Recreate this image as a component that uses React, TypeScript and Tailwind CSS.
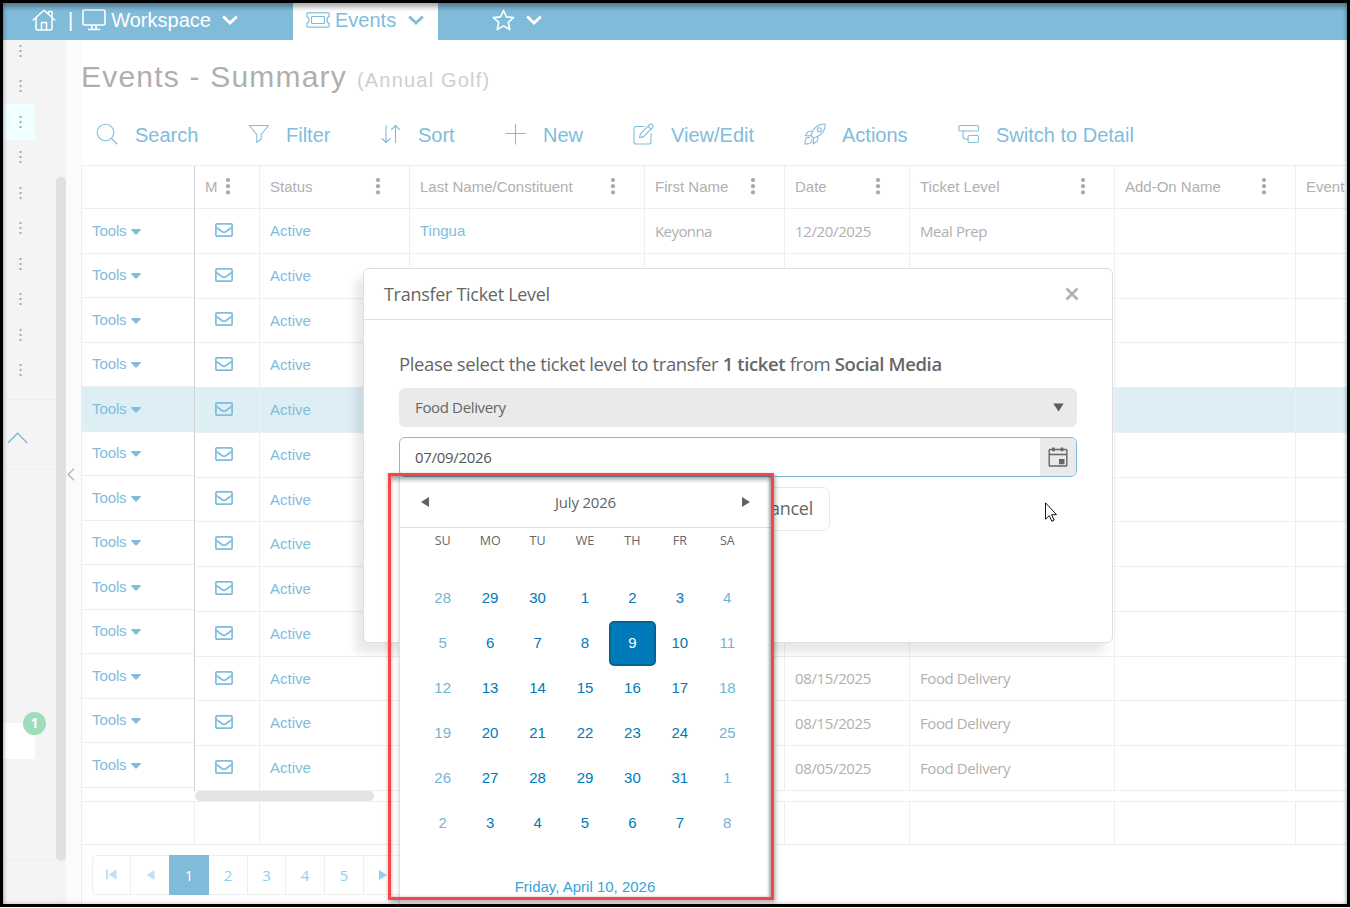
import clsx from "clsx";
import type { ReactNode } from "react";

type Row = {
  status: string;
  lastName?: string;
  firstName?: string;
  date?: string;
  ticketLevel?: string;
  selected?: boolean;
};

const rows: Row[] = [
  {
    status: "Active",
    lastName: "Tingua",
    firstName: "Keyonna",
    date: "12/20/2025",
    ticketLevel: "Meal Prep",
  },
  { status: "Active" },
  { status: "Active" },
  { status: "Active" },
  { status: "Active", selected: true },
  { status: "Active" },
  { status: "Active" },
  { status: "Active" },
  { status: "Active" },
  { status: "Active" },
  { status: "Active", date: "08/15/2025", ticketLevel: "Food Delivery" },
  { status: "Active", date: "08/15/2025", ticketLevel: "Food Delivery" },
  { status: "Active", date: "08/05/2025", ticketLevel: "Food Delivery" },
];

const columns = [
  "M",
  "Status",
  "Last Name/Constituent",
  "First Name",
  "Date",
  "Ticket Level",
  "Add-On Name",
  "Event",
];

const gridCols = "grid grid-cols-[65px_150px_235px_140px_125px_205px_181px_51px]";
const segoe = "font-['Open_Sans',sans-serif]";

const weekDays = ["SU", "MO", "TU", "WE", "TH", "FR", "SA"];
const days = [
  28, 29, 30, 1, 2, 3, 4, 5, 6, 7, 8, 9, 10, 11, 12, 13, 14, 15, 16, 17, 18, 19,
  20, 21, 22, 23, 24, 25, 26, 27, 28, 29, 30, 31, 1, 2, 3, 4, 5, 6, 7, 8,
];

function Chevron({ className }: { className?: string }) {
  return (
    <svg className={className} width="16" height="10" viewBox="0 0 16 10">
      <path
        d="M1.2 1.500 8 8l6.800-6.500"
        fill="none"
        stroke="currentColor"
        strokeWidth="2.800"
      />
    </svg>
  );
}

function HomeIcon() {
  return (
    <svg
      width="24"
      height="22"
      viewBox="0 0 24 22"
      fill="none"
      stroke="currentColor"
      strokeWidth="1.5"
      strokeLinecap="round"
      strokeLinejoin="round">
      <path d="M1.2 11 12 1.2 22.8 11M4 9v10.5q0 1.5 1.5 1.5h13q1.5 0 1.5-1.5V9M9.5 21v-7.5h5V21M16.5 4V2.5h3.5v5" />
    </svg>
  );
}

function MonitorIcon() {
  return (
    <svg
      width="24"
      height="22"
      viewBox="0 0 24 22"
      fill="none"
      stroke="currentColor"
      strokeWidth="1.6"
      strokeLinejoin="round">
      <rect x="1" y="1" width="22" height="15" rx="1.5" />
      <path d="M10 16v4M14 16v4M6 20.5h12" />
    </svg>
  );
}

function TicketIcon() {
  return (
    <svg
      width="24"
      height="16"
      viewBox="0 0 24 16"
      fill="none"
      stroke="currentColor"
      strokeWidth="1.2"
      strokeLinejoin="round">
      <path d="M2 .8h20q1.2 0 1.2 1.2v2.6q-2.2.6-2.2 3.4t2.2 3.4V14q0 1.2-1.2 1.2H2Q.8 15.200.8 14v-2.600Q3 10.800 3 8T.8 4.600V2Q.8.8 2 .8Z" />
      <rect x="5.500" y="4.500" width="13" height="7" rx=".8" />
    </svg>
  );
}

function StarIcon() {
  return (
    <svg width="23" height="22" viewBox="0 0 23 22">
      <path
        d="m11.500 1.300 2.900 6.600 7.200.7-5.400 4.800 1.600 7.200-6.300-3.700-6.300 3.700 1.600-7.200L1.400 8.600l7.200-.7Z"
        fill="none"
        stroke="currentColor"
        strokeWidth="1.6"
        strokeLinejoin="round"
      />
    </svg>
  );
}

function ToolIcon({ children }: { children: ReactNode }) {
  return (
    <svg
      width="22"
      height="22"
      viewBox="0 0 22 22"
      fill="none"
      stroke="currentColor"
      strokeWidth="1.1"
      strokeLinecap="round"
      strokeLinejoin="round">
      {children}
    </svg>
  );
}

function ToolbarItem({
  label,
  width,
  gap,
  children,
}: {
  label: string;
  width: string;
  gap: string;
  children: ReactNode;
}) {
  return (
    <button type="button" className={clsx("flex items-center", width, gap)}>
      <ToolIcon>{children}</ToolIcon>
      <span className="pt-[2px] whitespace-nowrap">{label}</span>
    </button>
  );
}

function Toolbar() {
  return (
    <div className="flex h-[30px] pl-[15px] text-[20px] text-[#80bddd]">
      <ToolbarItem label="Search" width="w-[152px]" gap="gap-[17px]">
        <circle cx="9.500" cy="9.500" r="8.300" />
        <path d="m15.500 15.500 5.500 5.500" />
      </ToolbarItem>
      <ToolbarItem label="Filter" width="w-[132px]" gap="gap-4">
        <path d="M1.500 2.500h19l-7.300 9v4.500l-4.400 3.300v-7.800Z" />
      </ToolbarItem>
      <ToolbarItem label="Sort" width="w-[125px]" gap="gap-4">
        <path d="M6 2.500v17M2 15.500l4 4 4-4M15.500 19.500v-17M11.500 6.500l4-4 4 4" />
      </ToolbarItem>
      <ToolbarItem label="New" width="w-[127px]" gap="gap-4">
        <path d="M10.500 1v20M1 10.500h19.500" />
      </ToolbarItem>
      <ToolbarItem label="View/Edit" width="w-[172px]" gap="gap-[17px]">
        <path d="M12 3.500H4q-2 0-2 2V19q0 2 2 2h13q2 0 2-2v-8.500M7.500 14.800l1-4.200 9-9q1.300-1.100 2.800.2 1.500 1.500.3 2.800l-9 9ZM15.900 3.200l3.200 3.200" />
      </ToolbarItem>
      <ToolbarItem label="Actions" width="w-[154px]" gap="gap-4">
        <path d="M7 12.500Q8.500 6.500 13 3.200 16.500.8 21.200 1q.2 4.700-2.400 8.200-3.300 4.300-9.300 5.800ZM8.300 8.200H5.500q-1.300 0-2 1.200L1.200 12.700l5.800-.2M13.800 13.700v2.800q0 1.300-1.200 2l-3.300 2.300.2-5.800M5.500 14.500q-2.800-.8-4 2.200-.5 1.500-.5 4.300 2.800 0 4.300-.5 3-1.200 2.200-4" />
        <circle cx="15.300" cy="6.700" r="2" />
      </ToolbarItem>
      <ToolbarItem label="Switch to Detail" width="w-[180px]" gap="gap-4">
        <path d="M2 2.500h17.500q1 0 1 1V7q0 1-1 1H2Q1 8 1 7V3.500q0-1 1-1ZM5 8v5.500Q5 16 7.500 16H10" />
        <rect x="10" y="12.500" width="10.500" height="7" rx="1.500" />
      </ToolbarItem>
    </div>
  );
}

function ColumnMenu() {
  return (
    <svg className="shrink-0" width="6" height="18" viewBox="0 0 6 18" fill="#a9a9a9">
      <circle cx="3" cy="2" r="2.100" />
      <circle cx="3" cy="8.200" r="2.100" />
      <circle cx="3" cy="14.400" r="2.100" />
    </svg>
  );
}

function Envelope() {
  return (
    <svg
      width="18"
      height="14"
      viewBox="0 0 18 14"
      fill="none"
      stroke="#80bddd"
      strokeWidth="1.700">
      <rect x=".9" y=".9" width="16.200" height="12.200" rx="1" />
      <path d="M1 4.300 7.200 8.800q1.800 1.200 3.600 0L17 4.300" />
    </svg>
  );
}

function TopNav() {
  return (
    <header className="flex h-[37px] shrink-0 bg-[#80bbd9] text-[20px] text-white">
      <div className="flex w-[290px] items-center pb-[3px] pl-[29px]">
        <HomeIcon />
        <span className="ml-3 text-[20px]">|</span>
        <span className="ml-[9px] flex">
          <MonitorIcon />
        </span>
        <span className="ml-[5px]">Workspace</span>
        <Chevron className="ml-[11px]" />
      </div>
      <div className="flex w-[145px] items-center bg-white pb-[3px] pl-[13px] text-[#80bddd]">
        <TicketIcon />
        <span className="ml-[5px]">Events</span>
        <Chevron className="ml-3" />
      </div>
      <div className="flex items-center pb-[3px] pl-[54px]">
        <StarIcon />
        <Chevron className="ml-[11px]" />
      </div>
    </header>
  );
}

function Sidebar() {
  return (
    <aside className="flex w-[63px] shrink-0 bg-[#f4f4f4]">
      <div className="w-[53px]">
        <div className="-mt-[7px]">
          {Array.from({ length: 10 }, (_, i) => (
            <div
              key={i}
              className={clsx(
                "flex h-[35.500px] w-8 items-center justify-center pl-[3px]",
                i === 2 && "bg-[#f0ffff]",
              )}>
              <svg width="3" height="14" fill="#a8a8a8">
                <rect x=".5" y="1" width="2" height="2" />
                <rect x=".5" y="6" width="2" height="2" />
                <rect x=".5" y="11" width="2" height="2" />
              </svg>
            </div>
          ))}
        </div>
        <div className="mt-[11px] h-[71px] border-y border-[#eeeeee] pt-[32px] pl-1">
          <svg width="21" height="12" viewBox="0 0 21 12">
            <path
              d="M.8 11 10.500 1.200 20.200 11"
              fill="none"
              stroke="#7db7d6"
              strokeWidth="1.400"
            />
          </svg>
        </div>
        <div className="relative mt-[253px] h-9 w-8 bg-white">
          <span className="absolute -top-[11px] left-[20px] flex size-[23px] items-center justify-center rounded-full bg-[#9fdcba] pb-[3px] font-['Open_Sans',sans-serif] text-[14px] font-bold text-white">
            1
          </span>
        </div>
        <div className="mt-[101px] border-t border-[#eeeeee]" />
      </div>
      <div className="w-[10px] bg-[#f3f3f3] pt-[137px]">
        <div className="h-[684px] rounded-full bg-[#e0e0e0]" />
      </div>
    </aside>
  );
}

function Grid() {
  return (
    <div className="mt-4 text-[15px] text-[#b0b0b0]">
      <div className="flex items-start border-t border-l border-[#eeeeee]">
        <div className="h-[625px] w-[113px] shrink-0 border-r border-[#d2d2d2]">
          <div className="h-[43px] border-b border-[#eeeeee]" />
          {rows.map((row, i) => (
            <div
              key={i}
              className={clsx(
                "flex h-[44.520px] items-center gap-1 border-b border-[#eeeeee] pl-[10px] text-[#80bddd]",
                row.selected && "bg-[#deeef5]",
              )}>
              <span className="pt-[0.400px] tracking-[-0.1px]">Tools</span>
              <svg className="mt-[2px]" width="10" height="6" fill="#80bddd">
                <path d="M.8 0h8.400q1 .4.4 1.200L5.800 5.200q-.8.600-1.600 0L.4 1.200Q-.2.4.8 0Z" />
              </svg>
            </div>
          ))}
        </div>
        <div className="min-w-0 flex-1 overflow-hidden">
          <div className={clsx(gridCols, "h-[43px] border-b border-[#eeeeee]")}>
            {columns.map((column) => (
              <div
                key={column}
                className="flex items-center justify-between overflow-hidden border-r border-[#eeeeee] pr-[28px] pl-[10px] whitespace-nowrap last:border-r-0 last:pr-0">
                {column}
                {column !== "Event" && <ColumnMenu />}
              </div>
            ))}
          </div>
          {rows.map((row, i) => (
            <div
              key={i}
              className={clsx(
                gridCols,
                "h-[44.770px] border-b border-[#eeeeee] *:flex *:items-center *:border-r *:border-[#eeeeee] *:pl-[10px] *:last:border-r-0",
                row.selected && "bg-[#deeef5]",
              )}>
              <div>
                <span className="ml-[10px] pb-[2px]">
                  <Envelope />
                </span>
              </div>
              <div className="pt-[0.700px] text-[#80bddd]">{row.status}</div>
              <div className="text-[#80bddd]">{row.lastName}</div>
              <div className={clsx(segoe, "tracking-[-0.58px]")}>{row.firstName}</div>
              <div className={clsx(segoe, "tracking-[-0.36px]")}>{row.date}</div>
              <div className={clsx(segoe, "tracking-[-0.4px]")}>{row.ticketLevel}</div>
              <div />
              <div />
            </div>
          ))}
          <div className="h-[10px]">
            <div className="h-[10px] w-[179px] rounded-full bg-[#e4e4e4]" />
          </div>
        </div>
      </div>
      <div className="flex h-11 border-y border-l border-[#eeeeee]">
        <div className="w-[113px] shrink-0 border-r border-[#eeeeee]" />
        <div className={clsx(gridCols, "*:border-r *:border-[#eeeeee]")}>
          {columns.map((column) => (
            <div key={column} />
          ))}
        </div>
      </div>
      <div className="flex h-[59px] border-l border-[#eeeeee] pt-[10px] pl-[10px]">
        <div
          className={clsx(
            segoe,
            "flex h-10 text-[#8fd0ee] *:flex *:items-center *:justify-center *:border-y *:border-r *:border-[#eeeeee]",
          )}>
          <div className="w-[39px] rounded-l-[4px] border-l">
            <svg width="11" height="11" fill="#bde2f2">
              <path d="M0 .5h2v10H0ZM10.500.5v10L2.500 5.500Z" />
            </svg>
          </div>
          <div className="w-[38px] border-r-0! pl-px">
            <svg width="9" height="10" fill="#bde2f2">
              <path d="M8.500 0v10L.5 5Z" />
            </svg>
          </div>
          <div className="w-10 border-0! bg-[#80bbd9] text-white">1</div>
          <div className="w-[39px]">2</div>
          <div className="w-[38px]">3</div>
          <div className="w-[39px]">4</div>
          <div className="w-[39px]">5</div>
          <div className="w-[39px]">
            <svg width="9" height="10" fill="#8fd0ee">
              <path d="M0 0v10l8-5Z" />
            </svg>
          </div>
        </div>
      </div>
    </div>
  );
}

function TransferDialog() {
  return (
    <div
      role="dialog"
      className={clsx(
        segoe,
        "absolute top-[268px] left-[363px] h-[375px] w-[750px] rounded-md border border-[#dcdfe4] bg-white text-[#666666] shadow-[-8px_10px_10px_rgba(0,0,0,0.09)]",
      )}>
      <div className="flex h-[51px] items-center justify-between border-b border-[#dcdfe4] pr-[33px] pl-5 text-[18px]">
        <span className="tracking-[-0.29px]">Transfer Ticket Level</span>
        <svg width="14" height="14" viewBox="0 0 14 14">
          <path d="m1.500 1.500 11 11m0-11-11 11" stroke="#b0b0b0" strokeWidth="2.500" />
        </svg>
      </div>
      <div className="px-[35px] pt-[31px]">
        <p className="text-[18.500px] leading-[26px] tracking-[-0.38px] whitespace-nowrap">
          Please select the ticket level to transfer{" "}
          <span className="font-semibold">1 ticket</span> from{" "}
          <span className="font-semibold">Social Media</span>
        </p>
        <div className="mt-[11px] flex h-[39px] items-center justify-between rounded-md bg-[#eaeaea] pr-[13px] pl-4 text-[15px] tracking-[-0.35px]">
          Food Delivery
          <svg width="11" height="9" fill="#5c5c5c">
            <path d="M.3.5h10.400L5.500 8.500Z" />
          </svg>
        </div>
        <div className="mt-[10px] flex h-10 items-center overflow-hidden rounded-md border border-[#7dbbdb] text-[15px]">
          <span className="flex-1 pl-[15px] tracking-[-0.32px] text-[#555555]">07/09/2026</span>
          <span className="flex h-full w-9 items-center justify-center bg-[#eaeaea]">
            <svg width="20" height="20" viewBox="0 0 20 20" fill="none" stroke="#666666">
              <path
                d="M2 2.500h16q.8 0 .8.8v14.900q0 .8-.8.8H2q-.8 0-.8-.8V3.300q0-.8.8-.8ZM1.200 7.500h17.600"
                strokeWidth="1.400"
              />
              <path d="M5.500.500v3.700M14 .500v3.700" strokeWidth="2.600" />
              <path d="M11 12h5.500v5.200H11Z" fill="#666666" stroke="none" />
            </svg>
          </span>
        </div>
        <button
          type="button"
          className="mt-[10px] ml-[340px] h-11 w-[91px] rounded-[7px] border border-[#e8e8e8] pb-[2px] pl-[3px] text-[18px] tracking-[-0.3px]">
          Cancel
        </button>
      </div>
    </div>
  );
}

function Calendar() {
  return (
    <div className="absolute top-[477px] left-[399px] h-[427px] w-[373px] border-l border-[#dcdfe4] bg-white text-[15px] shadow-[0_0_5px_rgba(0,0,0,0.15)]">
      <div
        className={clsx(
          segoe,
          "flex h-[51px] items-center justify-between border-b border-[#dcdfe4] pr-[22px] pl-[21px] text-[#5f6368]",
        )}>
        <svg width="8" height="10" fill="#5f6368">
          <path d="M8 0v10L0 5Z" />
        </svg>
        <span className="tracking-[-0.2px]">July 2026</span>
        <svg width="8" height="10" fill="#5f6368">
          <path d="M0 0v10l8-5Z" />
        </svg>
      </div>
      <div
        className={clsx(
          segoe,
          "grid h-[27px] w-[351px] grid-cols-7 items-center pl-[19px] text-center text-[12.500px] text-[#666666]",
        )}>
        {weekDays.map((day) => (
          <span key={day}>{day}</span>
        ))}
      </div>
      <div className="mt-[21px] grid w-[351px] auto-rows-[45px] grid-cols-7 pl-[19px]">
        {days.map((day, i) => {
          const weekend = i % 7 === 0 || i % 7 === 6;
          const selected = i === 11;
          return (
            <span
              key={i}
              className={clsx(
                "flex items-center justify-center",
                weekend ? "text-[#72b4d5]" : "text-[#007ab8]",
                selected &&
                  "rounded-[5px] border-2 border-[#006699] bg-[#007ab8] text-white!",
              )}>
              {day}
            </span>
          );
        })}
      </div>
      <div className="mt-[30px] pr-[2px] text-center text-[#36a3d9]">Friday, April 10, 2026</div>
    </div>
  );
}

export default function App() {
  return (
    <div className="relative h-[908px] w-[1350px] overflow-hidden bg-white p-[3px] font-['Liberation_Sans',Arial,sans-serif]">
      <div className="flex h-[901px] flex-col overflow-hidden">
        <TopNav />
        <div className="flex min-h-0 flex-1">
          <Sidebar />
          <div className="flex w-[15px] shrink-0 items-center bg-[#fbfbfb]">
            <svg className="ml-px mb-[-4px]" width="8" height="13">
              <path d="M7 .8 1.200 6.500 7 12.200" fill="none" stroke="#b8b8b8" strokeWidth="1.500" />
            </svg>
          </div>
          <main className="min-w-0 flex-1 overflow-hidden">
            <h1 className="flex h-[79px] items-baseline pt-[14px] text-[30px] tracking-[1.2px] text-[#afafaf]">
              Events - Summary
              <span className="ml-[10px] text-[20px] text-[#cfcfcf]">(Annual Golf)</span>
            </h1>
            <Toolbar />
            <Grid />
          </main>
        </div>
      </div>

      <TransferDialog />
      <Calendar />

      <div className="absolute top-[473px] left-[388px] h-[427px] w-[386px] border-3 border-[#fd4343] shadow-[1px_2px_5px_rgba(0,0,0,0.35),inset_0_4px_4px_rgba(0,0,0,0.3),inset_-2px_0_3px_rgba(0,0,0,0.25)]" />
      <svg className="absolute top-[502px] left-[1044px]" width="14" height="20">
        <path
          d="M1.500.8v16.400l3.800-3.600 2.500 5.600 2.400-1.100-2.500-5.400h4.800Z"
          fill="white"
          stroke="#111122"
        />
      </svg>
      <div className="absolute top-0 left-0 h-[907px] w-[1350px] border-3 border-black shadow-[inset_0_5px_4px_rgba(0,0,0,0.25),inset_0_0_4px_rgba(0,0,0,0.25)]" />
    </div>
  );
}
